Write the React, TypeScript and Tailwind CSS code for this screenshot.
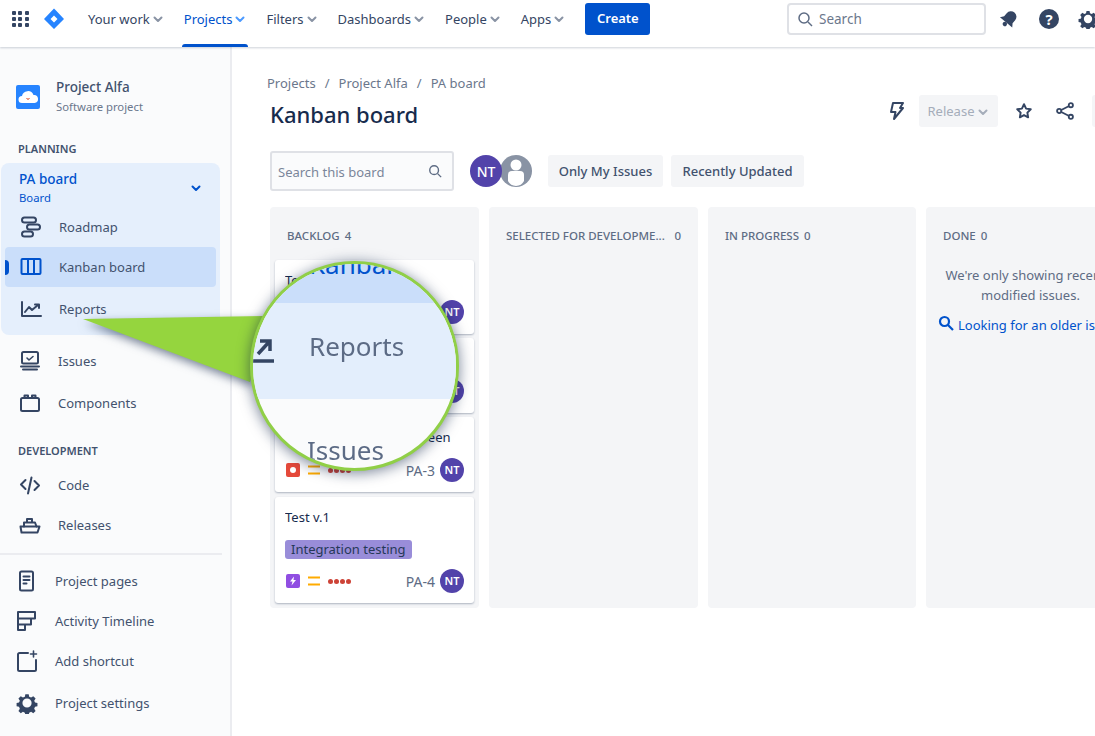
import React from 'react';

const Chevron = ({ className = 'text-[#8993a4]' }: { className?: string }) => (
  <svg width="12" height="12" viewBox="0 0 12 12" className={className}>
    <path d="M2.500 4.500L6 8l3.500-3.500" fill="none" stroke="currentColor" strokeWidth="2" strokeLinecap="round" strokeLinejoin="round" />
  </svg>
);

const NavItem = ({ label, active }: { label: string; active?: boolean }) => (
  <div className={`relative flex h-[38px] shrink-0 items-center gap-[2px] px-[2px] text-[13px] whitespace-nowrap ${active ? 'text-[#0052cc]' : 'text-[#344563]'}`}>
    <span className="pt-[2px]">{label}</span>
    <Chevron className={active ? 'text-[#4c9aff]' : 'text-[#8993a4]'} />
    {active && <div className="absolute right-0 bottom-[-9px] left-0 h-[3px] rounded-t-sm bg-[#0052cc]" />}
  </div>
);

const Gear = ({ size = 20, className = 'text-[#344563]' }: { size?: number; className?: string }) => (
  <svg width={size} height={size} viewBox="0 0 24 24" className={className}>
    <path fillRule="evenodd" fill="currentColor" d="M10 1.5h4l.6 3 2.3 1 2.6-1.7 2.8 2.8-1.7 2.6 1 2.3 2.9.5v4l-2.9.6-1 2.3 1.7 2.6-2.8 2.8-2.6-1.7-2.3 1-.6 2.9h-4l-.6-2.9-2.3-1-2.6 1.7-2.8-2.8 1.7-2.6-1-2.3-2.9-.6v-4l2.9-.5 1-2.3-1.7-2.6 2.8-2.8 2.6 1.7 2.3-1zM12 6.500a5.500 5.500 0 100 11 5.500 5.500 0 000-11z" transform="translate(1.1 1.1) scale(.91)" />
  </svg>
);

const SideIcon = ({ children }: { children: React.ReactNode }) => (
  <svg width="24" height="24" viewBox="0 0 24 24" fill="none" stroke="#344563" strokeWidth="2" strokeLinecap="round" strokeLinejoin="round">
    {children}
  </svg>
);

const icons: Record<string, React.ReactNode> = {
  roadmap: (
    <SideIcon>
      <rect x="3" y="2.5" width="14" height="5" rx="2.5" />
      <rect x="8" y="9.5" width="13" height="5" rx="2.5" />
      <rect x="3" y="16.5" width="11" height="5" rx="2.5" />
    </SideIcon>
  ),
  kanban: (
    <SideIcon>
      <g stroke="#0052cc">
        <rect x="2.5" y="4" width="19" height="15" rx="1" />
        <path d="M9 4v15M15 4v15" />
      </g>
    </SideIcon>
  ),
  reports: (
    <SideIcon>
      <path d="M3 5v14h19" />
      <path d="M6 15l4-5 3 3 6-5" />
      <path d="M16 7.500h4v3.500" />
    </SideIcon>
  ),
  issues: (
    <SideIcon>
      <rect x="4" y="3" width="16" height="11.500" rx="1.500" />
      <path d="M9 9l2 2 4-3.500" strokeWidth="1.600" />
      <path d="M3 17.500h18M5 20.500h14" />
    </SideIcon>
  ),
  components: (
    <SideIcon>
      <rect x="3" y="7" width="18" height="13" rx="1.500" />
      <path d="M6.500 7V4.500h3.500V7M14 7V4.500h3.500V7" />
    </SideIcon>
  ),
  code: (
    <SideIcon>
      <path d="M7.500 7L3 11.500 7.500 16M16.500 8l4.500 4.500-4.500 4.500M13.500 4.500l-3.500 16" />
    </SideIcon>
  ),
  releases: (
    <SideIcon>
      <path d="M2.500 13.500h19l-2 6h-16z" />
      <path d="M6 13.500V9.500h11l1.500 4M9 9.500V6h5v3.500" />
    </SideIcon>
  ),
  pages: (
    <SideIcon>
      <rect x="5" y="2.500" width="13" height="19" rx="1.500" />
      <path d="M8.500 7.500h6M8.500 11h6M8.500 14.500h3" />
    </SideIcon>
  ),
  timeline: (
    <SideIcon>
      <path d="M3 3h17v6.500h-4v6h-6v5.500H3zM3 9.500h13M3 15.500h7" />
    </SideIcon>
  ),
  shortcut: (
    <SideIcon>
      <path d="M13 4H4.500A1.500 1.500 0 003 5.500v15A1.500 1.500 0 004.500 22h15a1.500 1.500 0 001.500-1.500V11" />
      <path d="M18.500 2v6M15.500 5h6" strokeWidth="1.600" />
    </SideIcon>
  ),
  settings: <Gear size={22} />,
};

const SideRow = ({ icon, label, className = '' }: { icon: string; label: string; className?: string }) => (
  <div className={`flex h-10 items-center text-[13px] text-[#42526e] ${className}`}>
    <span className="flex w-6 shrink-0 justify-center">{icons[icon]}</span>
    <span className="pt-[2px]">{label}</span>
  </div>
);

const Avatar = () => (
  <div className="flex h-6 w-6 shrink-0 items-center justify-center rounded-full bg-[#5243aa] text-[11px] font-semibold text-white">NT</div>
);

const PriorityIcon = () => (
  <svg width="14" height="10" viewBox="0 0 14 10">
    <path d="M1 1.500h12M1 8.500h12" stroke="#ffab00" strokeWidth="2" />
  </svg>
);

const Dots = () => (
  <div className="flex gap-[1px]">
    {[0, 1, 2, 3].map((d) => (
      <div key={d} className="h-[5px] w-[5px] rounded-full bg-[#cd4337]" />
    ))}
  </div>
);

const TypeIcon = ({ kind }: { kind: 'bug' | 'epic' }) =>
  kind === 'bug' ? (
    <div className="ml-[1px] flex h-[14px] w-[14px] items-center justify-center rounded-[2px] bg-[#e5493a]">
      <div className="h-[6px] w-[6px] rounded-full bg-white" />
    </div>
  ) : (
    <div className="ml-[1px] flex h-[14px] w-[14px] items-center justify-center rounded-[2px] bg-[#904ee2]">
      <svg width="10" height="10" viewBox="0 0 10 10">
        <path d="M6 .5L2 5.500h2.500L3.500 9.500 8 4H5.500z" fill="#fff" />
      </svg>
    </div>
  );

const Card = ({ title, label, code, kind, className = '' }: { title: string; label?: string; code: string; kind: 'bug' | 'epic'; className?: string }) => (
  <div className={`flex flex-col rounded-[3px] bg-white px-[10px] shadow-[0_1px_2px_rgba(9,30,66,0.3)] ${className}`}>
    <div className="mt-[10px] truncate text-[13px] leading-5 text-[#172b4d]">{title}</div>
    {label && (
      <div className="mt-[13px] self-start rounded-[3px] bg-[#998dd9] px-[6px] text-[13px] leading-[19px] text-[#253858]">{label}</div>
    )}
    <div className="mt-auto mb-[10px] flex h-6 items-center">
      <TypeIcon kind={kind} />
      <span className="ml-[7px]"><PriorityIcon /></span>
      <span className="ml-[7px]"><Dots /></span>
      <span className="mr-[5px] ml-auto text-[14px] text-[#5e6c84]">{code}</span>
      <Avatar />
    </div>
  </div>
);

const ColumnHead = ({ name, count, wide, className = 'pl-[17px]' }: { name: string; count: number; wide?: boolean; className?: string }) => (
  <div className={`flex h-[56px] items-center pt-[1px] text-[11.500px] font-medium whitespace-nowrap text-[#5e6c84] ${wide ? 'justify-between pr-[17px]' : 'gap-[5px]'} ${className}`}>
    <span>{name}</span>
    <span>{count}</span>
  </div>
);

const Magnifier = () => (
  <div className="absolute top-[261px] left-[250px] h-[210px] w-[209px] overflow-hidden rounded-full border-[3px] border-[#90cf47] bg-[#fafbfc] shadow-[0_2px_14px_rgba(9,30,66,0.55)]">
    <div className="flex h-full flex-col blur-[0.7px]">
      <div className="h-[40px] overflow-hidden bg-[#cadefa] pl-[56px]">
        <div className="mt-[-13px] text-[26px] leading-[26px] text-[#0052cc]">Kanban</div>
      </div>
      <div className="flex h-[97px] items-start bg-[#e3eefc]">
        <svg width="22" height="32" viewBox="0 0 22 32" fill="none" stroke="#344563" strokeWidth="3.500" className="mt-[30px] shrink-0">
          <path d="M0 28h21M5 21L16 9M7 8h10v10" />
        </svg>
        <span className="mt-[25px] ml-[34px] text-[26px] leading-[36px] text-[#5c6b85]">Reports</span>
      </div>
      <div className="pt-[33px] pl-[54px] text-[26px] leading-[36px] text-[#5c6b85]">Issues</div>
    </div>
  </div>
);

const Callout = () => (
  <svg width="190" height="80" viewBox="0 0 190 80" className="absolute top-[310px] left-[78px] drop-shadow-[2px_4px_5px_rgba(9,30,66,0.55)]">
    <polygon points="5,9 186,6 172,72" fill="#95d53e" />
  </svg>
);

export default function App() {
  return (
    <div className="relative h-[736px] w-[1095px] overflow-hidden bg-white font-['Noto_Sans','Open_Sans',sans-serif]">
      <header className="relative z-10 flex h-[47px] items-center bg-white pb-[9px] shadow-[0_1px_2px_rgba(9,30,66,0.2)]">
        <div className="ml-[12px] grid w-[17px] shrink-0 grid-cols-3 gap-[2px]">
          {[0, 1, 2, 3, 4, 5, 6, 7, 8].map((n) => (
            <div key={n} className="h-[4px] w-[4px] rounded-[1px] bg-[#344563]" />
          ))}
        </div>
        <svg width="22" height="22" viewBox="0 0 22 22" className="ml-[14px] shrink-0">
          <path fillRule="evenodd" d="M11 .5l2 2 8 8.500-10 10-10-10zM11 7.500L7.500 11l3.500 3.500 3.500-3.500z" fill="#2684ff" />
        </svg>
        <div className="ml-[21px] flex items-center gap-[16px]">
          <NavItem label="Your work" />
          <NavItem label="Projects" active />
          <NavItem label="Filters" />
          <NavItem label="Dashboards" />
          <NavItem label="People" />
          <NavItem label="Apps" />
        </div>
        <button className="ml-[18px] h-8 w-[65px] shrink-0 rounded-[3px] bg-[#0052cc] text-[13px] font-semibold text-white">Create</button>
        <div className="ml-auto flex h-8 w-[199px] shrink-0 items-center rounded-[4px] border-2 border-[#dfe1e6] pl-[8px]">
          <svg width="16" height="16" viewBox="0 0 16 16" fill="none" stroke="#5e6c84" strokeWidth="1.500">
            <circle cx="7" cy="7" r="5" />
            <path d="M11 11l4 4" />
          </svg>
          <span className="ml-[6px] text-[13.500px] text-[#6b778c]">Search</span>
        </div>
        <svg width="20" height="20" viewBox="0 0 20 20" className="ml-[13px] shrink-0">
          <g transform="rotate(40 10 10)" fill="#344563">
            <path d="M10 1.500a5.500 5.500 0 015.500 5.500v4l2.500 3.500H2l2.500-3.500V7A5.500 5.500 0 0110 1.500z" />
            <circle cx="10" cy="16.500" r="2.200" />
          </g>
        </svg>
        <div className="ml-[20px] flex h-5 w-5 shrink-0 items-center justify-center rounded-full bg-[#344563] text-[15px] leading-none font-bold text-white">?</div>
        <div className="mr-[-3px] ml-[19px] shrink-0"><Gear size={20} /></div>
      </header>

      <div className="flex h-[689px]">
        <aside className="w-[232px] shrink-0 border-r-2 border-[#ebecf0] bg-[#fafbfc]">
          <div className="flex items-center pt-[30px] pl-[16px]">
            <svg width="24" height="24" viewBox="0 0 24 24">
              <rect width="24" height="24" rx="2" fill="#2684ff" />
              <path d="M6 18a3.500 3.500 0 010-7 6 6 0 0111.500-1 4 4 0 011 8z" fill="#fff" />
              <path d="M10.500 13.500q1.500 1.500 3 0" stroke="#de350b" fill="none" />
            </svg>
            <div className="ml-[16px]">
              <div className="text-[13.500px] leading-5 font-medium text-[#42526e]">Project Alfa</div>
              <div className="text-[11.300px] leading-5 text-[#6b778c]">Software project</div>
            </div>
          </div>
          <div className="mt-[22px] pl-[18px] text-[11px] leading-5 font-semibold text-[#42526e]">PLANNING</div>
          <div className="mt-[4px] ml-[1px] h-[172px] w-[219px] rounded-[8px] bg-[#e5effc]">
            <div className="flex h-[44px] items-center pt-[5px] pr-[18px] pl-[18px]">
              <div className="flex-1">
                <div className="text-[13.500px] leading-[20px] font-medium text-[#0052cc]">PA board</div>
                <div className="text-[11.300px] leading-[18px] text-[#0052cc]">Board</div>
              </div>
              <Chevron className="text-[#0052cc]" />
            </div>
            <SideRow icon="roadmap" label="Roadmap" className="pl-[18px] [&>span:last-child]:ml-[16px]" />
            <div className="relative ml-[4px] w-[211px] rounded-[4px] bg-[#cadefa]">
              <div className="absolute top-[13px] left-0 h-[15px] w-[4px] rounded-r-sm bg-[#0052cc]" />
              <SideRow icon="kanban" label="Kanban board" className="pl-[14px] text-[#0052cc] [&>span:last-child]:ml-[16px]" />
            </div>
            <SideRow icon="reports" label="Reports" className="mt-[2px] pl-[18px] [&>span:last-child]:ml-[16px]" />
          </div>
          <SideRow icon="issues" label="Issues" className="mt-[6px] pl-[18px] [&>span:last-child]:ml-[16px]" />
          <SideRow icon="components" label="Components" className="mt-[2px] pl-[18px] [&>span:last-child]:ml-[16px]" />
          <div className="mt-[18px] pl-[18px] text-[11px] leading-5 font-semibold text-[#42526e]">DEVELOPMENT</div>
          <SideRow icon="code" label="Code" className="mt-[4px] pl-[18px] [&>span:last-child]:ml-[16px]" />
          <SideRow icon="releases" label="Releases" className="pl-[18px] [&>span:last-child]:ml-[16px]" />
          <div className="mt-[8px] h-[2px] w-[222px] bg-[#ebecf0]" />
          <SideRow icon="pages" label="Project pages" className="mt-[6px] pl-[15px] [&>span:last-child]:ml-[16px]" />
          <SideRow icon="timeline" label="Activity Timeline" className="pl-[15px] [&>span:last-child]:ml-[16px]" />
          <SideRow icon="shortcut" label="Add shortcut" className="pl-[15px] [&>span:last-child]:ml-[16px]" />
          <SideRow icon="settings" label="Project settings" className="mt-[2px] pl-[15px] [&>span:last-child]:ml-[16px]" />
        </aside>

        <main className="min-w-0 flex-1 pl-[38px]">
          <div className="mt-[26px] ml-[-3px] flex gap-[9px] text-[13px] leading-5 text-[#6b778c]">
            <span>Projects</span><span>/</span><span>Project Alfa</span><span>/</span><span>PA board</span>
          </div>
          <div className="mt-[6px] flex h-[32px] items-center">
            <h1 className="mb-[2px] w-[618px] shrink-0 text-[22px] leading-8 font-medium text-[#172b4d]">Kanban board</h1>
            <div className="mb-[8px] flex shrink-0 items-center">
              <svg width="18" height="20" viewBox="0 0 18 20" fill="none" stroke="#344563" strokeWidth="2" strokeLinejoin="round" className="shrink-0">
                <path d="M5 2h10l-3 5h3L6 18l1.500-7H3z" />
              </svg>
              <div className="ml-[13px] flex h-8 w-[79px] shrink-0 items-center justify-center gap-[3px] rounded-[3px] bg-[#f4f5f7] pt-[1px] text-[13px] text-[#a5adba]">
                Release <Chevron className="text-[#a5adba]" />
              </div>
              <svg width="18" height="18" viewBox="0 0 24 24" fill="none" stroke="#344563" strokeWidth="2.600" strokeLinejoin="round" className="ml-[17px] shrink-0">
                <path d="M12 3l2.800 5.800 6.200.9-4.500 4.400 1 6.300-5.500-3-5.500 3 1-6.300L3 9.700l6.200-.9z" />
              </svg>
              <svg width="20" height="20" viewBox="0 0 24 24" fill="none" stroke="#344563" strokeWidth="2.200" className="ml-[22px] shrink-0">
                <circle cx="19" cy="5" r="2.500" /><circle cx="5" cy="12" r="2.500" /><circle cx="19" cy="19" r="2.500" />
                <path d="M7.500 10.800L17 6M7.500 13.200L17 18" />
              </svg>
              <div className="ml-[17px] h-8 w-10 shrink-0 rounded-[3px] bg-[#f4f5f7]" />
            </div>
          </div>

          <div className="mt-[20px] flex h-10 items-center">
            <div className="flex h-10 w-[184px] shrink-0 items-center justify-between rounded-[3px] border-2 border-[#dfe1e6] bg-[#fafbfc] pr-[10px] pl-[6px] text-[13px] text-[#7a869a]">
              <span className="pt-[3px]">Search this board</span>
              <svg width="14" height="14" viewBox="0 0 16 16" fill="none" stroke="#5e6c84" strokeWidth="1.600">
                <circle cx="7" cy="7" r="5" /><path d="M11 11l4 4" />
              </svg>
            </div>
            <div className="relative z-10 ml-[16px] flex h-8 w-8 shrink-0 items-center justify-center rounded-full bg-[#5243aa] text-[14px] font-medium text-white">NT</div>
            <svg width="34" height="34" viewBox="0 0 34 34" className="ml-[-3px] shrink-0">
              <circle cx="17" cy="17" r="16" fill="#8993a4" />
              <circle cx="17" cy="11" r="5.500" fill="#fff" />
              <path d="M9 21a4 4 0 014-4h8a4 4 0 014 4v6a9 9 0 01-16 0z" fill="#fff" />
            </svg>
            <button className="ml-[15px] h-8 w-[115px] shrink-0 rounded-[3px] bg-[#f4f5f7] pt-[2px] text-[13px] font-medium text-[#42526e]">Only My Issues</button>
            <button className="ml-[8px] h-8 w-[133px] shrink-0 rounded-[3px] bg-[#f4f5f7] pt-[2px] text-[13px] font-medium text-[#42526e]">Recently Updated</button>
          </div>

          <div className="mt-[16px] flex h-[401px] gap-[10px]">
            <section className="flex w-[209px] shrink-0 flex-col rounded-[4px] bg-[#f4f5f7] px-[5px]">
              <ColumnHead name="BACKLOG" count={4} className="pl-[12px]" />
              <Card title="Test v.1" code="PA-1" kind="bug" className="mt-[-3px] h-[74px]" />
              <Card title="Test v.1" code="PA-2" kind="bug" className="mt-[4px] h-[75px]" />
              <Card title="Testing of the home screen" code="PA-3" kind="bug" className="mt-[4px] h-[75px]" />
              <Card title="Test v.1" label="Integration testing" code="PA-4" kind="epic" className="mt-[5px] h-[106px]" />
            </section>
            <section className="w-[209px] shrink-0 rounded-[4px] bg-[#f4f5f7]">
              <ColumnHead name="SELECTED FOR DEVELOPME..." count={0} wide />
            </section>
            <section className="w-[208px] shrink-0 rounded-[4px] bg-[#f4f5f7]">
              <ColumnHead name="IN PROGRESS" count={0} />
            </section>
            <section className="w-[209px] shrink-0 rounded-[4px] bg-[#f4f5f7]">
              <ColumnHead name="DONE" count={0} />
              <p className="mt-[2px] px-[10px] text-center text-[13px] leading-5 text-[#5e6c84]">We're only showing recently modified issues.</p>
              <div className="mt-[10px] flex items-center pl-[12px] text-[13px] leading-5 whitespace-nowrap text-[#0052cc]">
                <svg width="16" height="16" viewBox="0 0 16 16" fill="none" stroke="#0052cc" strokeWidth="2.200" className="mr-[4px] mb-[4px] shrink-0">
                  <circle cx="6.500" cy="6.500" r="4.500" /><path d="M10 10l5 5" />
                </svg>
                Looking for an older issue?
              </div>
            </section>
          </div>
        </main>
      </div>

      <Callout />
      <Magnifier />
    </div>
  );
}
